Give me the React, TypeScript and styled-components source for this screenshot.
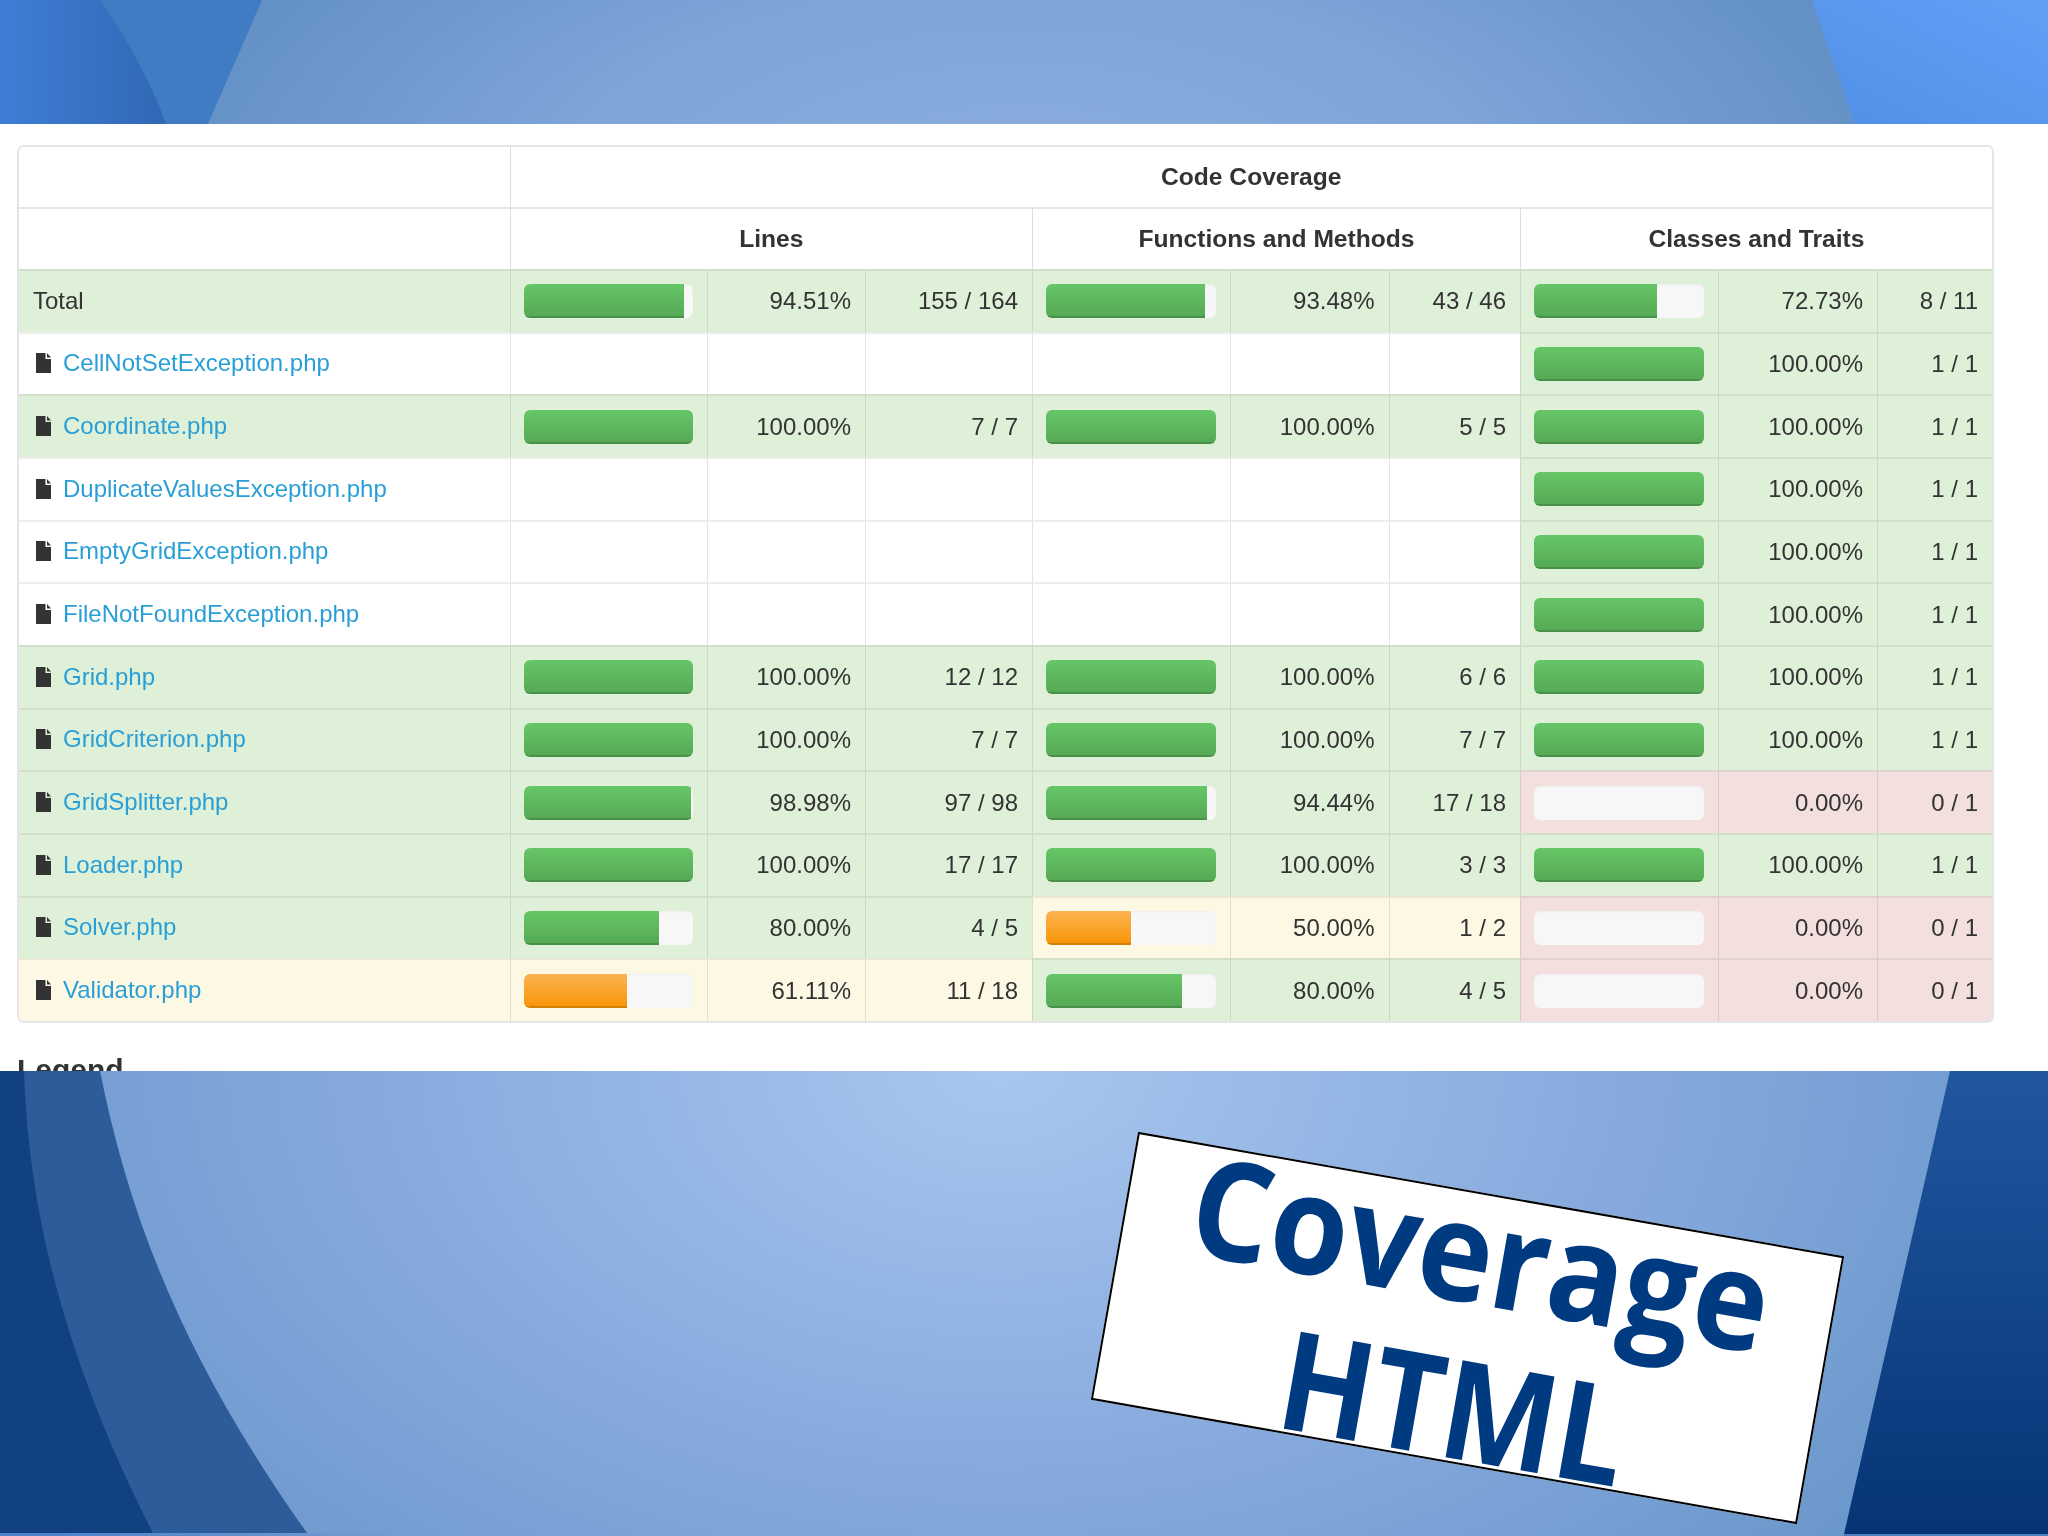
import React from 'react';
import styled, { createGlobalStyle } from 'styled-components';

type Tone = 'none' | 'success' | 'warning' | 'danger';

type Metric = {
  percent: number,
  count: string
}

type Row = {
  name: string,
  isFile: boolean,
  lines?: Metric,
  functions?: Metric,
  classes?: Metric
}

const rows: Row[] = [
  { name: 'Total', isFile: false, lines: { percent: 94.51, count: '155 / 164' }, functions: { percent: 93.48, count: '43 / 46' }, classes: { percent: 72.73, count: '8 / 11' } },
  { name: 'CellNotSetException.php', isFile: true, classes: { percent: 100, count: '1 / 1' } },
  { name: 'Coordinate.php', isFile: true, lines: { percent: 100, count: '7 / 7' }, functions: { percent: 100, count: '5 / 5' }, classes: { percent: 100, count: '1 / 1' } },
  { name: 'DuplicateValuesException.php', isFile: true, classes: { percent: 100, count: '1 / 1' } },
  { name: 'EmptyGridException.php', isFile: true, classes: { percent: 100, count: '1 / 1' } },
  { name: 'FileNotFoundException.php', isFile: true, classes: { percent: 100, count: '1 / 1' } },
  { name: 'Grid.php', isFile: true, lines: { percent: 100, count: '12 / 12' }, functions: { percent: 100, count: '6 / 6' }, classes: { percent: 100, count: '1 / 1' } },
  { name: 'GridCriterion.php', isFile: true, lines: { percent: 100, count: '7 / 7' }, functions: { percent: 100, count: '7 / 7' }, classes: { percent: 100, count: '1 / 1' } },
  { name: 'GridSplitter.php', isFile: true, lines: { percent: 98.98, count: '97 / 98' }, functions: { percent: 94.44, count: '17 / 18' }, classes: { percent: 0, count: '0 / 1' } },
  { name: 'Loader.php', isFile: true, lines: { percent: 100, count: '17 / 17' }, functions: { percent: 100, count: '3 / 3' }, classes: { percent: 100, count: '1 / 1' } },
  { name: 'Solver.php', isFile: true, lines: { percent: 80, count: '4 / 5' }, functions: { percent: 50, count: '1 / 2' }, classes: { percent: 0, count: '0 / 1' } },
  { name: 'Validator.php', isFile: true, lines: { percent: 61.11, count: '11 / 18' }, functions: { percent: 80, count: '4 / 5' }, classes: { percent: 0, count: '0 / 1' } }
];

const columnWidths = [490.5, 197.5, 158, 167, 198, 158.5, 131.5, 197.6, 159.4, 115];

const toneOf = (metric?: Metric): Tone => {
  if (!metric) {
    return 'none';
  }

  if (metric.percent >= 70) {
    return 'success';
  }

  return metric.percent >= 50 ? 'warning' : 'danger';
};

const toneColors: Record<Tone, string> = {
  none: '#ffffff',
  success: '#dff0d8',
  warning: '#fcf8e3',
  danger: '#f2dfde'
};

const GlobalStyle = createGlobalStyle`
  html, body {
    margin: 0;
    padding: 0;
    background: #ffffff;
  }
`;

const Slide = styled.div`
  width: 2048px;
  height: 1536px;
  overflow: hidden;
  display: flex;
  flex-direction: column;
  font-family: 'Liberation Sans', Arial, sans-serif;
`;

const TopBand = styled.div`
  height: 124px;
  flex: none;
  background: radial-gradient(ellipse 880px 420px at 1024px 210px, #8cafe0 0%, #7ea4d8 55%, #6391c5 100%);
`;

const BandArt = styled.svg`
  display: block;
  width: 100%;
  height: 100%;
`;

const Content = styled.div`
  height: 947px;
  box-sizing: border-box;
  flex: none;
  overflow: hidden;
  background: #ffffff;
  padding: 21px 54px 0 17px;
  color: #333333;
  filter: blur(0.45px);
`;

const TableFrame = styled.div`
  border: 2px solid #e4e5e4;
  border-radius: 7px;
  overflow: hidden;
`;

const CoverageTable = styled.table`
  width: 100%;
  table-layout: fixed;
  border-collapse: separate;
  border-spacing: 0;
  font-size: 24px;
  line-height: 34px;
`;

const HeadCell = styled.th`
  height: 60px;
  padding: 0 14px;
  text-align: center;
  font-size: 24.6px;
  font-weight: 700;
  color: #333333;
  background: #ffffff;
  border-left: 1px solid #dcdcdc;
  border-top: 2px solid #e4e5e4;

  tr:first-child > & {
    height: 60px;
    border-top: 0;
  }

  &:first-child {
    border-left: 0;
  }
`;

const Cell = styled.td<{ $tone: Tone, $align?: string }>`
  height: 60.67px;
  padding: 0 14px;
  text-align: ${({ $align }) => $align || 'right'};
  vertical-align: middle;
  white-space: nowrap;
  background: ${({ $tone }) => toneColors[$tone]};
  border-left: 1px solid rgba(120, 120, 120, 0.2);
  border-top: 2px solid rgba(140, 140, 140, 0.16);

  &:first-child {
    border-left: 0;
  }
`;

const FileName = styled.span`
  display: inline-flex;
  align-items: center;
  gap: 12px;
  padding: 1px 0 0 3px;
`;

const FileLink = styled.a`
  color: #2a9fd6;
  text-decoration: none;
`;

const Track = styled.div`
  height: 34px;
  margin-left: -1px;
  border-radius: 6px;
  overflow: hidden;
  background: #f7f7f7;
  box-shadow: inset 0 1px 2px rgba(0, 0, 0, 0.04);
`;

const Fill = styled.div<{ $tone: Tone }>`
  height: 100%;
  background: ${({ $tone }) => ($tone === 'success'
    ? 'linear-gradient(to bottom, #66c667, #55a855)'
    : 'linear-gradient(to bottom, #fbb450, #f89406)')};
  box-shadow: inset 0 -2px 0 rgba(0, 0, 0, 0.14);
`;

const Legend = styled.h2`
  margin: 30px 0 0;
  font-size: 30px;
  line-height: 33px;
  font-weight: 700;
  color: #333333;
`;

const BottomBand = styled.div`
  position: relative;
  height: 465px;
  flex: none;
  background: radial-gradient(ellipse 1120px 720px at 1000px 0, #a8c7ee 0%, #87aade 55%, #6a97cb 100%);
`;

const StickyNote = styled.div`
  position: absolute;
  left: 1109px;
  top: 121px;
  width: 717px;
  height: 272px;
  box-sizing: border-box;
  border: 2.5px solid #000000;
  background: #ffffff;
  transform: rotate(10deg);
  display: flex;
  flex-direction: column;
  align-items: center;
  overflow: hidden;
  color: #003a80;
  font-family: 'Open Sans', sans-serif;
  font-weight: 700;
  font-size: 130px;
  line-height: 156px;
`;

const NoteLine = styled.div<{ $widthScale: number }>`
  transform: scale(${({ $widthScale }) => $widthScale}, 1.06);
  margin-top: -22px;
  margin-bottom: 22px;
`;

const FileIcon = () => (
  <svg
    fill='#333333'
    height='20'
    viewBox='0 0 15 20'
    width='15'
  >
    <path d='M0 0H9.5V6H15V20H0Z' />
    <path d='M11 0L15 4.5H11Z' />
  </svg>
);

const MetricCells: React.FC<{ metric?: Metric }> = ({ metric }) => {
  const tone = toneOf(metric);

  return (
    <>
      <Cell $tone={tone}>
        {metric && (
          <Track>
            {metric.percent > 0 && (
              <Fill
                $tone={tone}
                style={{ width: `${metric.percent}%` }}
              />
            )}
          </Track>
        )}
      </Cell>
      <Cell $tone={tone}>{metric && `${metric.percent.toFixed(2)}%`}</Cell>
      <Cell $tone={tone}>{metric?.count}</Cell>
    </>
  );
};

const App: React.FC = () => {
  return (
    <>
      <GlobalStyle />
      <Slide>
        <TopBand>
          <BandArt viewBox='0 0 2048 124'>
            <defs>
              <linearGradient id='topLeft' x1='0' x2='1' y1='0' y2='0'>
                <stop offset='0' stopColor='#3f7ed6' />
                <stop offset='1' stopColor='#3068b4' />
              </linearGradient>
              <linearGradient id='topRight' x1='0' x2='1' y1='1' y2='0'>
                <stop offset='0' stopColor='#4f90e6' />
                <stop offset='1' stopColor='#62a0f8' />
              </linearGradient>
            </defs>
            <path d='M100 0H262L208 124H120Z' fill='#3f7cc4' />
            <path d='M0 0H100C128 40 150 80 166 124H0Z' fill='url(#topLeft)' />
            <path d='M1812 0H2048V124H1855Z' fill='url(#topRight)' />
          </BandArt>
        </TopBand>
        <Content>
          <TableFrame>
            <CoverageTable>
              <colgroup>
                {columnWidths.map((width, index) => (
                  <col key={index} style={{ width }} />
                ))}
              </colgroup>
              <thead>
                <tr>
                  <HeadCell />
                  <HeadCell colSpan={9}>Code Coverage</HeadCell>
                </tr>
                <tr>
                  <HeadCell />
                  <HeadCell colSpan={3}>Lines</HeadCell>
                  <HeadCell colSpan={3}>Functions and Methods</HeadCell>
                  <HeadCell colSpan={3}>Classes and Traits</HeadCell>
                </tr>
              </thead>
              <tbody>
                {rows.map((row) => (
                  <tr key={row.name}>
                    <Cell $align='left' $tone={row.isFile ? toneOf(row.lines) : 'success'}>
                      {row.isFile
                        ? (
                          <FileName>
                            <FileIcon />
                            <FileLink href='#'>{row.name}</FileLink>
                          </FileName>
                        )
                        : row.name}
                    </Cell>
                    <MetricCells metric={row.lines} />
                    <MetricCells metric={row.functions} />
                    <MetricCells metric={row.classes} />
                  </tr>
                ))}
              </tbody>
            </CoverageTable>
          </TableFrame>
          <Legend>Legend</Legend>
        </Content>
        <BottomBand>
          <BandArt viewBox='0 0 2048 465'>
            <defs>
              <linearGradient id='rightWedge' x1='0' x2='0' y1='0' y2='1'>
                <stop offset='0' stopColor='#21579f' />
                <stop offset='1' stopColor='#063475' />
              </linearGradient>
              <linearGradient id='bottomGlowLeft' x1='0' x2='1' y1='0' y2='0'>
                <stop offset='0' stopColor='#4a80cc' />
                <stop offset='1' stopColor='#4a80cc' stopOpacity='0' />
              </linearGradient>
            </defs>
            <path d='M0 0H100C130 150 185 290 307 462H0Z' fill='#2e5c9b' />
            <path d='M0 0H24C28 120 55 270 153 462H0Z' fill='#124182' />
            <path d='M1950 0H2048V463H1844Z' fill='url(#rightWedge)' />
            <path d='M0 462H400V465H0Z' fill='url(#bottomGlowLeft)' />
            <path d='M1844 463H2048V465H1844Z' fill='#4a7fc4' />
          </BandArt>
          <StickyNote>
            <NoteLine $widthScale={0.97}>Coverage</NoteLine>
            <NoteLine $widthScale={0.94}>HTML</NoteLine>
          </StickyNote>
        </BottomBand>
      </Slide>
    </>
  );
};

export default App;
